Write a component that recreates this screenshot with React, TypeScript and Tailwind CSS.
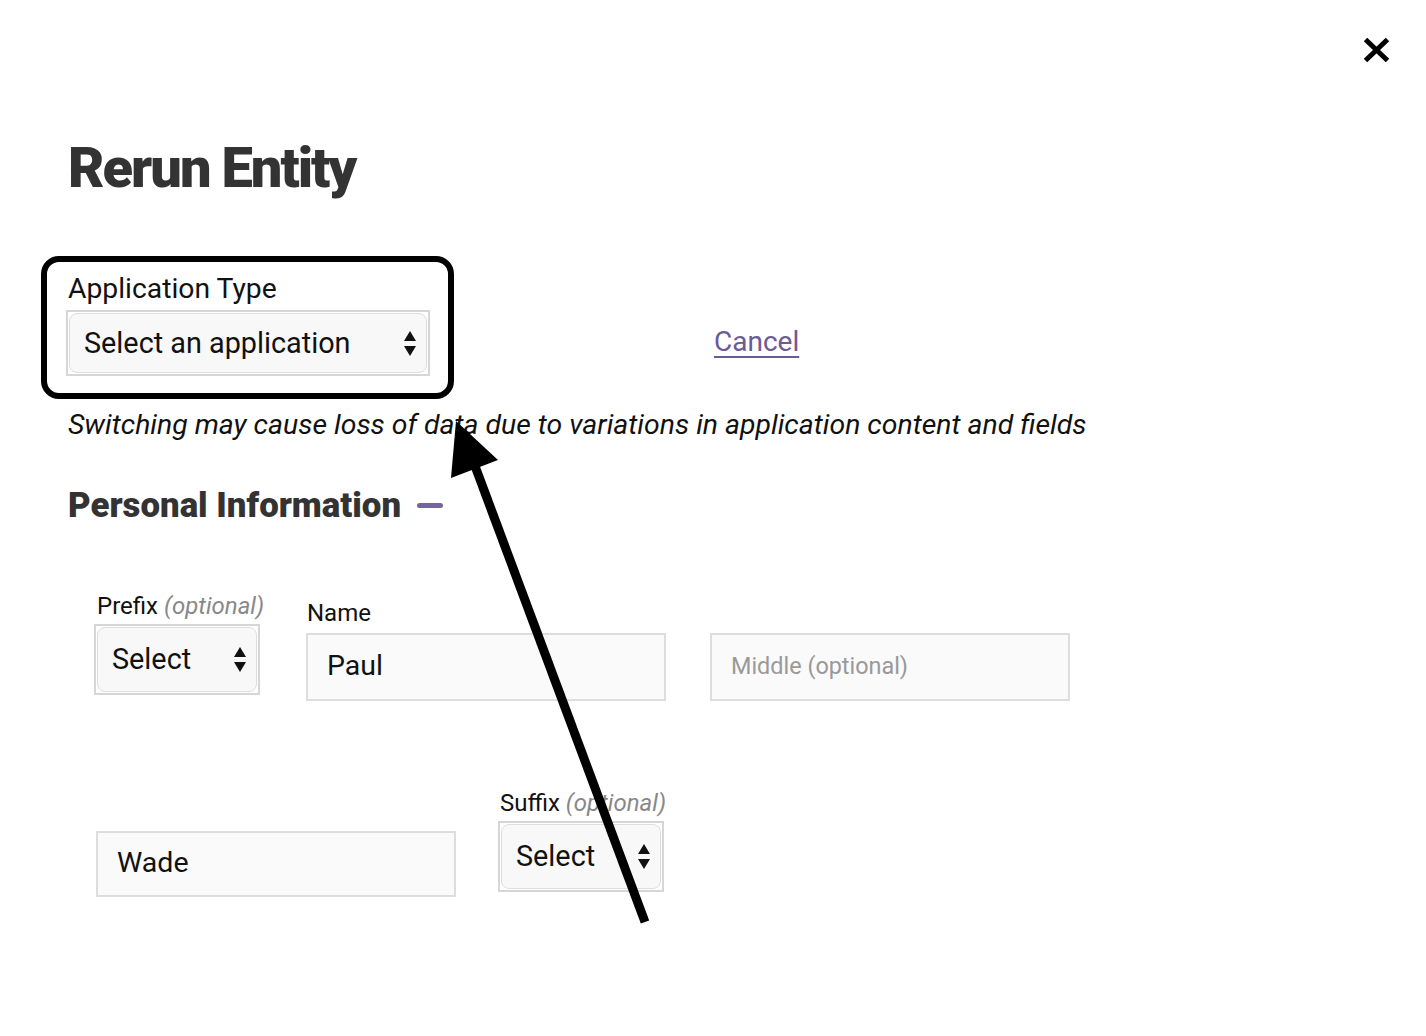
import React from 'react';

function Arrows() {
  return (
    <svg width="12" height="25" viewBox="0 0 12 25" className="shrink-0">
      <path d="M0 10 L6 0 L12 10 Z" fill="#111" />
      <path d="M0 15 L12 15 L6 25 Z" fill="#111" />
    </svg>
  );
}

function SelectBox({ text, className }: { text: string; className: string }) {
  return (
    <div className={`border-2 border-[#d6d6d6] p-[1px] ${className}`}>
      <div className="flex h-full items-center justify-between rounded-[8px] border border-[#dedede] bg-[#f8f8f8] pl-[14px] pr-[10px] text-[28.8px] leading-none text-[#111]">
        <span>{text}</span>
        <Arrows />
      </div>
    </div>
  );
}

function TextBox({ value, placeholder, className }: { value?: string; placeholder?: string; className: string }) {
  return (
    <div className={`flex items-center border-2 border-[#dddddd] bg-[#fafafa] pl-[19px] leading-none ${className}`}>
      {value ? (
        <span className="text-[28.5px] text-[#111]">{value}</span>
      ) : (
        <span className="text-[23.4px] text-[#999]">{placeholder}</span>
      )}
    </div>
  );
}

export default function App() {
  return (
    <div className="relative h-[1036px] w-full overflow-hidden bg-white font-['Roboto',sans-serif] text-[#111]">
      {/* close button */}
      <button className="absolute left-[1363px] top-[37px]">
        <svg width="27" height="26" viewBox="0 0 27 26">
          <path d="M2.5 2.5 L24.5 23.5 M24.5 2.5 L2.5 23.5" stroke="#000" strokeWidth="5" />
        </svg>
      </button>

      <div className="pt-[140px]">
        <h1 className="pl-[68px] text-[56px] font-black leading-none tracking-[-2px] text-[#333]">Rerun Entity</h1>

        <div className="mt-[60px] flex items-start pl-[41px]">
          <div className="w-[413px] rounded-[18px] border-[6px] border-black pb-[17px] pl-[19px] pr-[18px] pt-[13px]">
            <div className="ml-[2px] text-[28.3px] leading-none">Application Type</div>
            <SelectBox text="Select an application" className="mt-[7px] h-[66px] w-[364px]" />
          </div>
          <a href="#" className="ml-[260px] mt-[72px] text-[28px] leading-none text-[#6b5a96] underline underline-offset-[5px]">
            Cancel
          </a>
        </div>

        <p className="mt-[12px] pl-[68px] text-[28.4px] italic leading-none">
          Switching may cause loss of data due to variations in application content and fields
        </p>

        <div className="mt-[48px] flex items-center pl-[68px]">
          <h2 className="text-[34.8px] font-black leading-none text-[#333]">Personal Information</h2>
          <span className="ml-[16px] h-[5px] w-[26px] rounded-full bg-[#76649e]" />
        </div>

        <div className="mt-[71px] flex items-start pl-[94px]">
          <div className="flex w-[166px] flex-col">
            <div className="ml-[3px] whitespace-nowrap text-[24px] leading-none">
              Prefix <span className="italic text-[#888]">(optional)</span>
            </div>
            <SelectBox text="Select" className="mt-[6px] h-[71px] w-[166px]" />
          </div>
          <div className="ml-[46px] mt-[7px] flex flex-col">
            <div className="ml-[1px] text-[24px] leading-none">Name</div>
            <TextBox value="Paul" className="mt-[8px] h-[68px] w-[360px]" />
          </div>
          <TextBox placeholder="Middle (optional)" className="ml-[44px] mt-[39px] h-[68px] w-[360px]" />
        </div>

        <div className="mt-[90px] flex items-start pl-[96px]">
          <TextBox value="Wade" className="mt-[40px] h-[66px] w-[360px]" />
          <div className="ml-[42px] flex w-[166px] flex-col">
            <div className="ml-[2px] whitespace-nowrap text-[24px] leading-none">
              Suffix <span className="italic text-[#888]">(optional)</span>
            </div>
            <SelectBox text="Select" className="mt-[6px] h-[71px] w-[166px]" />
          </div>
        </div>
      </div>

      {/* annotation arrow */}
      <svg className="pointer-events-none absolute left-0 top-0" width="1426" height="1036" viewBox="0 0 1426 1036">
        <line x1="645" y1="922" x2="475" y2="466" stroke="#000" strokeWidth="9" />
        <path d="M456 421 L451 478 L498 460 Z" fill="#000" />
      </svg>
    </div>
  );
}
